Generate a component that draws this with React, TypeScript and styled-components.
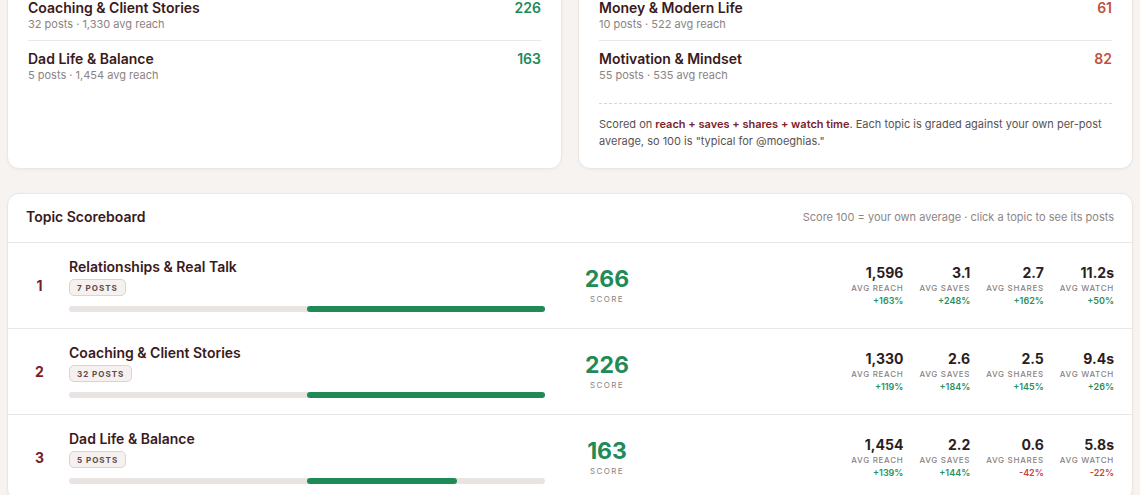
import styled, { createGlobalStyle } from 'styled-components';

const GlobalStyle = createGlobalStyle`
  * { box-sizing: border-box; }
  body {
    margin: 0;
    background: #f6f3f0;
    font-family: Inter, "Noto Sans", "Liberation Sans", sans-serif;
    color: #3a1a1c;
    overflow: hidden;
  }
`;

const Page = styled.div`
  padding: 0 7px;
`;

const TopGrid = styled.div`
  display: grid;
  grid-template-columns: 1fr 1fr;
  gap: 16px;
  margin-top: -31px;
`;

const Card = styled.div`
  background: #fff;
  border: 1px solid #ece6e2;
  border-radius: 12px;
  box-shadow: 0 1px 3px rgba(60, 30, 20, 0.04);
`;

const SummaryCard = styled(Card)`
  padding: 20px 20px 18px;
`;

const TopicItem = styled.div`
  display: flex;
  justify-content: space-between;
  align-items: flex-start;
  padding: 9px 0;
  & + & {
    border-top: 1px solid #ebe7e4;
  }
`;

const TopicName = styled.div`
  font-size: 14px;
  font-weight: 600;
  line-height: 18px;
  color: #3a1a1c;
`;

const TopicMeta = styled.div`
  font-size: 11px;
  line-height: 14px;
  color: #8a8383;
`;

const TopicScore = styled.div<{ $tone: 'good' | 'bad' }>`
  font-size: 14px;
  font-weight: 600;
  line-height: 18px;
  color: ${p => (p.$tone === 'good' ? '#218a57' : '#c0503a')};
`;

const Note = styled.p`
  margin: 12px 0 0;
  padding-top: 12px;
  border-top: 1px dashed #dcd7d4;
  font-size: 11px;
  line-height: 17px;
  color: #5a5252;

  strong {
    color: #7b1d2a;
    font-weight: 600;
  }
`;

const Scoreboard = styled(Card)`
  margin-top: 24px;
  overflow: hidden;
`;

const BoardHeader = styled.div`
  display: flex;
  justify-content: space-between;
  align-items: center;
  padding: 13px 18px 15px;
  border-bottom: 1px solid #ebe7e4;
`;

const BoardTitle = styled.h2`
  margin: 0;
  font-size: 14px;
  font-weight: 600;
  line-height: 20px;
  color: #3a1a1c;
`;

const BoardHint = styled.span`
  font-size: 11px;
  color: #8c8686;
`;

const Row = styled.div`
  display: grid;
  grid-template-columns: 27px 476px 92px 1fr;
  column-gap: 16px;
  align-items: center;
  padding: 15px 18px 16px;
  & + & {
    border-top: 1px solid #ebe7e4;
  }
`;

const Rank = styled.div`
  text-align: center;
  font-size: 14px;
  font-weight: 700;
  color: #7b1d2a;
`;

const TopicCol = styled.div`
  display: flex;
  flex-direction: column;
  align-items: flex-start;
`;

const PostBadge = styled.span`
  margin-top: 3px;
  height: 17px;
  padding: 0 7px;
  display: inline-flex;
  align-items: center;
  border: 1px solid #dcd2cf;
  border-radius: 5px;
  background: #f6f1ef;
  font-size: 8px;
  font-weight: 700;
  letter-spacing: 1px;
  color: #5c4c4c;
`;

const Track = styled.div`
  position: relative;
  margin-top: 10px;
  width: 100%;
  height: 6px;
  border-radius: 3px;
  background: #e9e4e2;
`;

const Fill = styled.div<{ $tone: 'good' | 'bad' }>`
  position: absolute;
  top: 0;
  bottom: 0;
  border-radius: 3px;
  background: ${p => (p.$tone === 'good' ? '#1f8a56' : '#c0503a')};
`;

const ScoreCol = styled.div`
  text-align: center;
`;

const ScoreValue = styled.div`
  font-size: 23px;
  font-weight: 700;
  line-height: 26px;
  color: #218a57;
`;

const ScoreLabel = styled.div`
  margin-top: 2px;
  font-size: 8px;
  line-height: 10px;
  letter-spacing: 1.4px;
  color: #8a8383;
`;

const Metrics = styled.div`
  justify-self: end;
  display: flex;
  gap: 16px;
`;

const Metric = styled.div`
  display: flex;
  flex-direction: column;
  align-items: flex-end;
`;

const MetricValue = styled.div`
  font-size: 14px;
  font-weight: 700;
  line-height: 17px;
  color: #2a1e1e;
`;

const MetricLabel = styled.div`
  margin-top: 2px;
  font-size: 8px;
  font-weight: 500;
  line-height: 10px;
  letter-spacing: 0.7px;
  color: #8a8383;
`;

const MetricDelta = styled.div<{ $up: boolean }>`
  margin-top: 2.5px;
  font-size: 9px;
  font-weight: 600;
  line-height: 11px;
  color: ${p => (p.$up ? '#2a9060' : '#c4463a')};
`;

const strongTopics = [
  { name: 'Coaching & Client Stories', meta: '32 posts · 1,330 avg reach', score: 226 },
  { name: 'Dad Life & Balance', meta: '5 posts · 1,454 avg reach', score: 163 },
];

const weakTopics = [
  { name: 'Money & Modern Life', meta: '10 posts · 522 avg reach', score: 61 },
  { name: 'Motivation & Mindset', meta: '55 posts · 535 avg reach', score: 82 },
];

type Stat = { value: string; label: string; delta: string };

const board: { name: string; posts: number; score: number; stats: Stat[] }[] = [
  {
    name: 'Relationships & Real Talk',
    posts: 7,
    score: 266,
    stats: [
      { value: '1,596', label: 'AVG REACH', delta: '+163%' },
      { value: '3.1', label: 'AVG SAVES', delta: '+248%' },
      { value: '2.7', label: 'AVG SHARES', delta: '+162%' },
      { value: '11.2s', label: 'AVG WATCH', delta: '+50%' },
    ],
  },
  {
    name: 'Coaching & Client Stories',
    posts: 32,
    score: 226,
    stats: [
      { value: '1,330', label: 'AVG REACH', delta: '+119%' },
      { value: '2.6', label: 'AVG SAVES', delta: '+184%' },
      { value: '2.5', label: 'AVG SHARES', delta: '+145%' },
      { value: '9.4s', label: 'AVG WATCH', delta: '+26%' },
    ],
  },
  {
    name: 'Dad Life & Balance',
    posts: 5,
    score: 163,
    stats: [
      { value: '1,454', label: 'AVG REACH', delta: '+139%' },
      { value: '2.2', label: 'AVG SAVES', delta: '+144%' },
      { value: '0.6', label: 'AVG SHARES', delta: '-42%' },
      { value: '5.8s', label: 'AVG WATCH', delta: '-22%' },
    ],
  },
];

// 100 sits at the middle of the bar; +/-100 reaches either end
const fillStyle = (score: number) => {
  const diff = Math.max(-100, Math.min(100, score - 100));
  const w = Math.abs(diff) / 2;
  return diff >= 0 ? { left: '50%', width: `${w}%` } : { right: '50%', width: `${w}%` };
};

const App = () => {
  return (
    <Page>
      <GlobalStyle />
      <TopGrid>
        <SummaryCard>
          {strongTopics.map(t => (
            <TopicItem key={t.name}>
              <div>
                <TopicName>{t.name}</TopicName>
                <TopicMeta>{t.meta}</TopicMeta>
              </div>
              <TopicScore $tone="good">{t.score}</TopicScore>
            </TopicItem>
          ))}
        </SummaryCard>
        <SummaryCard>
          {weakTopics.map(t => (
            <TopicItem key={t.name}>
              <div>
                <TopicName>{t.name}</TopicName>
                <TopicMeta>{t.meta}</TopicMeta>
              </div>
              <TopicScore $tone="bad">{t.score}</TopicScore>
            </TopicItem>
          ))}
          <Note>
            Scored on <strong>reach + saves + shares + watch time</strong>. Each topic is graded
            against your own per-post average, so 100 is "typical for @moeghias."
          </Note>
        </SummaryCard>
      </TopGrid>

      <Scoreboard>
        <BoardHeader>
          <BoardTitle>Topic Scoreboard</BoardTitle>
          <BoardHint>Score 100 = your own average · click a topic to see its posts</BoardHint>
        </BoardHeader>
        {board.map((row, i) => (
          <Row key={row.name}>
            <Rank>{i + 1}</Rank>
            <TopicCol>
              <TopicName>{row.name}</TopicName>
              <PostBadge>{row.posts} POSTS</PostBadge>
              <Track>
                <Fill $tone={row.score >= 100 ? 'good' : 'bad'} style={fillStyle(row.score)} />
              </Track>
            </TopicCol>
            <ScoreCol>
              <ScoreValue>{row.score}</ScoreValue>
              <ScoreLabel>SCORE</ScoreLabel>
            </ScoreCol>
            <Metrics>
              {row.stats.map(s => (
                <Metric key={s.label}>
                  <MetricValue>{s.value}</MetricValue>
                  <MetricLabel>{s.label}</MetricLabel>
                  <MetricDelta $up={!s.delta.startsWith('-')}>{s.delta}</MetricDelta>
                </Metric>
              ))}
            </Metrics>
          </Row>
        ))}
      </Scoreboard>
    </Page>
  );
};

export default App;
